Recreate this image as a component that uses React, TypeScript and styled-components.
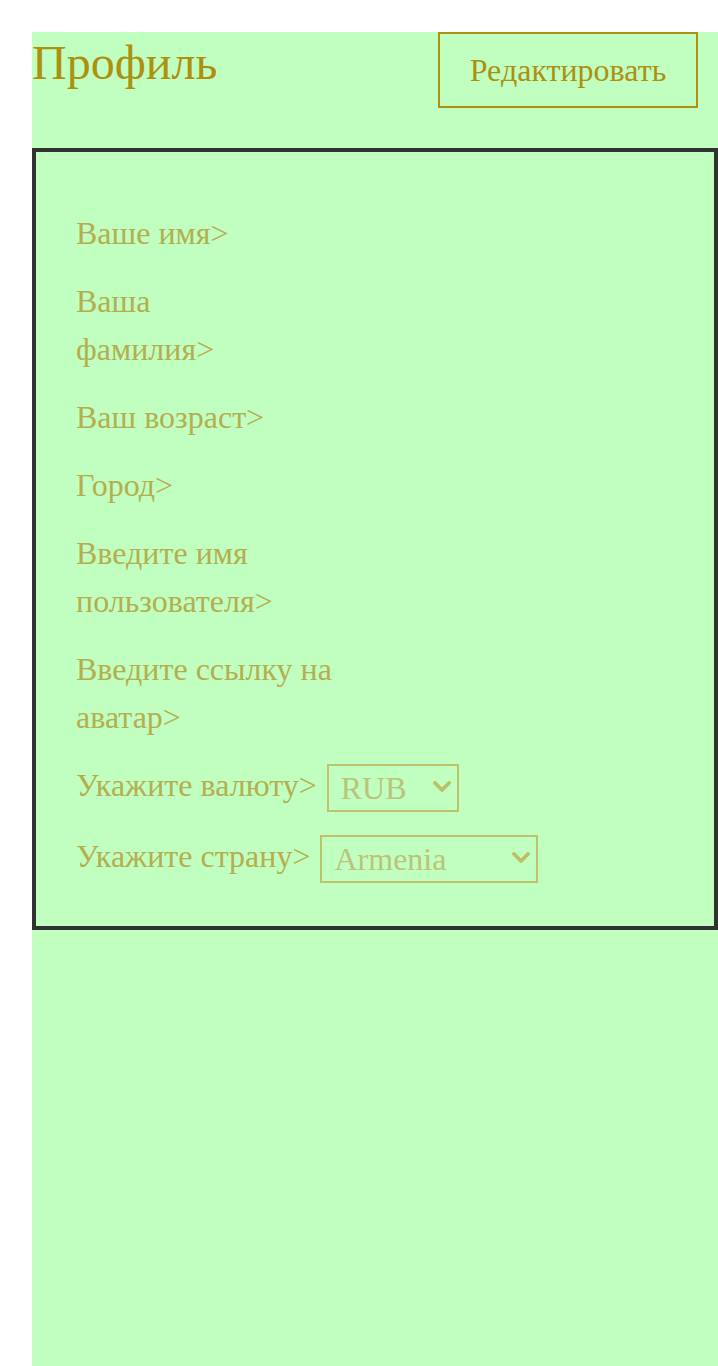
import React from "react";
import styled, { createGlobalStyle } from "styled-components";

const GlobalStyle = createGlobalStyle`
  html, body { margin: 0; padding: 0; background: #ffffff; }
  body { font-family: "Liberation Serif", "Times New Roman", serif; }
  * { box-sizing: border-box; }
`;

const Page = styled.div`
  margin: 32px 0 0 32px;
  min-height: calc(100vh - 32px);
  background: #c0ffc0;
  display: flex;
  flex-direction: column;
`;

const Header = styled.header`
  display: flex;
  justify-content: space-between;
  align-items: flex-start;
  padding-right: 20px;
  margin-bottom: 40px;
`;

const Title = styled.h1`
  margin: 0;
  font-weight: 400;
  font-size: 48px;
  line-height: 62px;
  color: #ad900e;
`;

const EditButton = styled.button`
  width: 260px;
  height: 76px;
  background: transparent;
  border: 2px solid #ad900e;
  color: #ad900e;
  font-family: "Liberation Serif", "Times New Roman", serif;
  font-size: 32px;
  padding: 0;
  cursor: pointer;
`;

const Card = styled.section`
  border: 4px solid #313131;
  padding: 57px 40px 23px 40px;
  display: flex;
  flex-direction: column;
`;

const Row = styled.div`
  display: flex;
  align-items: flex-start;
  gap: 10px;
  margin-bottom: 20px;
`;

const Label = styled.label`
  font-size: 32px;
  line-height: 48px;
  color: #b5ae4e;
`;

const SelectBox = styled.div<{ $w: number }>`
  position: relative;
  width: ${(p) => p.$w}px;
  margin-top: 3px;
`;

const Select = styled.select`
  appearance: none;
  -webkit-appearance: none;
  display: block;
  width: 100%;
  height: 48px;
  border: 2px solid #bfc26a;
  background: transparent;
  color: #bcc37a;
  font-family: "Liberation Serif", "Times New Roman", serif;
  font-size: 32px;
  line-height: 44px;
  padding: 0 30px 0 12px;
  border-radius: 0;
  outline: none;
`;

const Chevron = styled.svg`
  position: absolute;
  right: 8px;
  top: 50%;
  width: 18px;
  height: 11px;
  margin-top: -7px;
  pointer-events: none;
`;

const fields: string[][] = [
  ["Ваше имя>"],
  ["Ваша", "фамилия>"],
  ["Ваш возраст>"],
  ["Город>"],
  ["Введите имя", "пользователя>"],
  ["Введите ссылку на", "аватар>"],
];

function Dropdown({ width, value, options }: { width: number; value: string; options: string[] }) {
  return (
    <SelectBox $w={width}>
      <Select defaultValue={value}>
        {options.map((o) => (
          <option key={o}>{o}</option>
        ))}
      </Select>
      <Chevron viewBox="0 0 18 11">
        <path d="M2 2 L9 9 L16 2" fill="none" stroke="#bcbf62" strokeWidth="3.6" strokeLinecap="square" />
      </Chevron>
    </SelectBox>
  );
}

export default function App() {
  return (
    <>
      <GlobalStyle />
      <Page>
        <Header>
          <Title>Профиль</Title>
          <EditButton>Редактировать</EditButton>
        </Header>
        <Card>
          {fields.map((lines, i) => (
            <Row key={i}>
              <Label>
                {lines.map((l, j) => (
                  <React.Fragment key={j}>
                    {j > 0 && <br />}
                    {l}
                  </React.Fragment>
                ))}
              </Label>
            </Row>
          ))}
          <Row>
            <Label>Укажите валюту&gt;</Label>
            <Dropdown width={132} value="RUB" options={["RUB", "USD", "EUR"]} />
          </Row>
          <Row>
            <Label>Укажите страну&gt;</Label>
            <Dropdown width={218} value="Armenia" options={["Armenia", "Russia", "Belarus"]} />
          </Row>
        </Card>
      </Page>
    </>
  );
}
